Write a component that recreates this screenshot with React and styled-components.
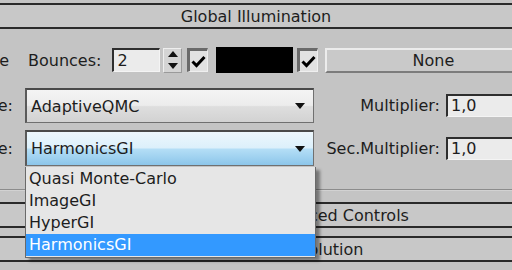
import React from 'react';
import styled, { createGlobalStyle } from 'styled-components';

const GlobalStyle = createGlobalStyle`
  html, body {
    margin: 0;
    padding: 0;
    background: #c4c4c4;
    overflow: hidden;
  }
  body {
    font-family: "DejaVu Sans", Verdana, sans-serif;
    font-size: 16px;
    color: #1d1d1d;
  }
`

const Screen = styled.div`
  width: 512px;
  height: 270px;
  box-sizing: border-box;
  padding-top: 3px;
  overflow: hidden;
  background: #c4c4c4;
`

const RolloutHeader = styled.div`
  height: ${p => p.$h || 26}px;
  box-sizing: border-box;
  margin: ${p => p.$mt || 0}px -4px 0;
  border-top: 2px solid #2a2a2a;
  border-bottom: 2px solid #2a2a2a;
  background: #c8c8c8;
  display: flex;
  align-items: center;
  justify-content: center;
  white-space: nowrap;
  overflow: hidden;
`

const Row = styled.div`
  display: flex;
  align-items: center;
  height: ${p => p.$h}px;
  margin-top: ${p => p.$mt}px;
`

const CutLabel = styled.div`
  width: ${p => p.$w}px;
  flex: none;
  display: flex;
  justify-content: flex-end;
  overflow: hidden;
  white-space: nowrap;
`

const Label = styled.span`
  flex: none;
  margin-left: ${p => p.$ml || 0}px;
  white-space: nowrap;
`

const RightLabel = styled.div`
  width: ${p => p.$w}px;
  flex: none;
  text-align: right;
  white-space: nowrap;
`

const TextBox = styled.div`
  flex: none;
  width: ${p => p.$w}px;
  height: ${p => p.$h || 24}px;
  margin-left: ${p => p.$ml || 0}px;
  box-sizing: border-box;
  background: #ebebeb;
  border-top: 2px solid #2e2e2e;
  border-left: 2px solid #2e2e2e;
  border-right: 1px solid #f4f4f4;
  border-bottom: 1px solid #f4f4f4;
  padding-left: 3px;
  display: flex;
  align-items: center;
  line-height: 1;
`

const Spinner = styled.div`
  flex: none;
  width: 19px;
  height: 25px;
  margin-left: 3px;
  box-sizing: border-box;
  background: #d4d4d4;
  border: 1px solid #9a9a9a;
  border-top-color: #eeeeee;
  border-left-color: #eeeeee;
  display: flex;
  flex-direction: column;
  align-items: center;
  justify-content: space-around;
`

const CheckBox = styled.div`
  flex: none;
  width: 21px;
  height: 24px;
  margin-left: ${p => p.$ml}px;
  box-sizing: border-box;
  background: #e2e2e2;
  border-top: 3px solid #6a6a6a;
  border-left: 3px solid #6a6a6a;
  border-right: 1px solid #efefef;
  border-bottom: 1px solid #efefef;
  display: flex;
  align-items: center;
  justify-content: center;
`

const Swatch = styled.div`
  flex: none;
  width: 77px;
  height: 26px;
  margin-left: 8px;
  background: #000;
`

const Button = styled.div`
  flex: none;
  width: 216px;
  height: 25px;
  margin-left: 7px;
  box-sizing: border-box;
  background: #c9c9c9;
  border-top: 2px solid #ececec;
  border-left: 2px solid #ececec;
  border-right: 2px solid #7c7c7c;
  border-bottom: 2px solid #7c7c7c;
  display: flex;
  align-items: center;
  justify-content: center;
`

const ComboWrap = styled.div`
  position: relative;
  flex: none;
  width: 289px;
  height: 100%;
  margin-left: 12px;
`

const Combo = styled.div`
  height: 100%;
  box-sizing: border-box;
  border: 1px solid #707070;
  border-top: 2px solid #4a4a4a;
  border-left: 2px solid #5a5a5a;
  background: ${p => p.$active
    ? 'linear-gradient(#edf7fd 0%, #dcf0fb 48%, #b4def6 52%, #8cc6ea 100%)'
    : 'linear-gradient(#f4f4f4 0%, #ececec 48%, #dedede 52%, #d2d2d2 100%)'};
  display: flex;
  align-items: center;
  justify-content: space-between;
  padding: 0 8px 0 4px;
`

const List = styled.div`
  position: absolute;
  left: 0;
  top: 100%;
  width: 291px;
  margin-top: 1px;
  box-sizing: border-box;
  background: #e6e6e6;
  border: 1px solid #6a6a6a;
  border-top: none;
  padding: 1px 0 1px;
  box-shadow: 4px 3px 3px rgba(0, 0, 0, 0.4);
  z-index: 2;
`

const Item = styled.div`
  height: 22px;
  line-height: 22px;
  padding-left: 3px;
  background: ${p => p.$selected ? '#3399ff' : 'transparent'};
  color: ${p => p.$selected ? '#ffffff' : '#1d1d1d'};
  white-space: nowrap;
`

const Divider = styled.div`
  margin: 23px -4px 0;
  height: 1px;
  background: #8c8c8c;
  border-bottom: 1px solid #d2d2d2;
`

const Check = () => (
  <svg width="15" height="13" viewBox="0 0 15 13">
    <path d="M1.5 6.5 L5.5 10.5 L13.5 2" fill="none" stroke="#000" strokeWidth="3" />
  </svg>
)

const Arrow = ({ up }) => (
  <svg width="10" height="6" viewBox="0 0 10 6">
    <path d={up ? 'M0 6 L5 0 L10 6 Z' : 'M0 0 L10 0 L5 6 Z'} fill="#111" />
  </svg>
)

const engines = ['Quasi Monte-Carlo', 'ImageGI', 'HyperGI', 'HarmonicsGI']

export default function App() {
  return (
    <Screen>
      <GlobalStyle />
      <RolloutHeader>Global Illumination</RolloutHeader>

      <Row $h={26} $mt={18}>
        <CutLabel $w={9}><span>Enable</span></CutLabel>
        <Label $ml={19}>Bounces:</Label>
        <TextBox $w={48} $ml={11}>2</TextBox>
        <Spinner>
          <Arrow up />
          <Arrow />
        </Spinner>
        <CheckBox $ml={5}><Check /></CheckBox>
        <Swatch />
        <CheckBox $ml={4}><Check /></CheckBox>
        <Button>None</Button>
      </Row>

      <Row $h={35} $mt={15}>
        <CutLabel $w={13}><span>Primary Engine:</span></CutLabel>
        <ComboWrap>
          <Combo>
            <span>AdaptiveQMC</span>
            <Arrow />
          </Combo>
        </ComboWrap>
        <RightLabel $w={126}>Multiplier:</RightLabel>
        <TextBox $w={120} $h={23} $ml={6}>1,0</TextBox>
      </Row>

      <Row $h={36} $mt={7}>
        <CutLabel $w={13}><span>Secondary Engine:</span></CutLabel>
        <ComboWrap>
          <Combo $active>
            <span>HarmonicsGI</span>
            <Arrow />
          </Combo>
          <List>
            {engines.map(name => (
              <Item key={name} $selected={name === 'HarmonicsGI'}>{name}</Item>
            ))}
          </List>
        </ComboWrap>
        <RightLabel $w={126}>Sec.Multiplier:</RightLabel>
        <TextBox $w={120} $h={23} $ml={6}>1,0</TextBox>
      </Row>

      <Divider />
      <RolloutHeader $mt={11}>Global Illumination Advanced Controls</RolloutHeader>
      <RolloutHeader $mt={8} $h={26}>Output Filters &amp; Resolution</RolloutHeader>
    </Screen>
  );
}
